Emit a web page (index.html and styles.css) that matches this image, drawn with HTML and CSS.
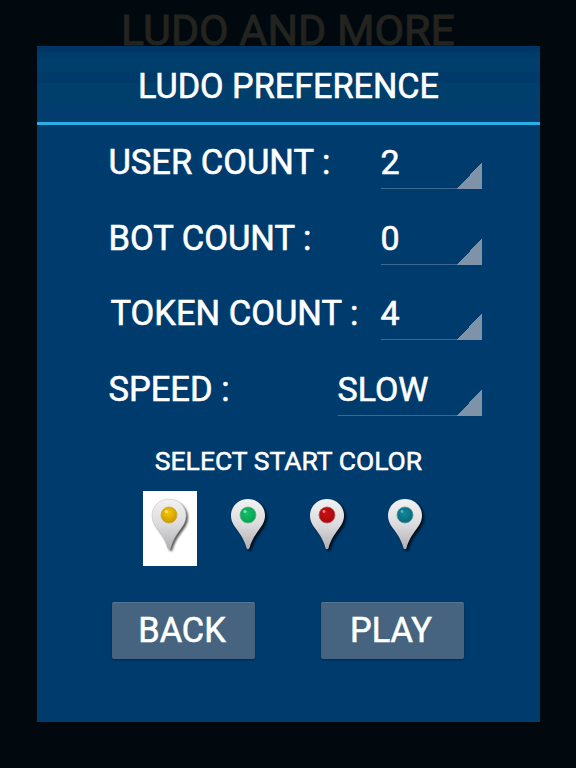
FILE: index.html
```html
<!DOCTYPE html>
<html lang="en">
<head>
<meta charset="utf-8">
<title>Ludo Preference</title>
<link rel="stylesheet" href="styles.css">
</head>
<body>
<svg class="defs" width="0" height="0" aria-hidden="true">
  <defs>
    <linearGradient id="body" x1="0" y1="0" x2="0" y2="1">
      <stop offset="0" stop-color="#f2f2f2"/>
      <stop offset="0.5" stop-color="#dcdcde"/>
      <stop offset="1" stop-color="#b0b0b4"/>
    </linearGradient>
    <radialGradient id="yellow" cx="0.45" cy="0.35" r="0.7">
      <stop offset="0" stop-color="#f6c800"/><stop offset="1" stop-color="#c79400"/>
    </radialGradient>
    <radialGradient id="green" cx="0.45" cy="0.4" r="0.7">
      <stop offset="0" stop-color="#12c06a"/><stop offset="1" stop-color="#0a9a50"/>
    </radialGradient>
    <radialGradient id="red" cx="0.45" cy="0.4" r="0.7">
      <stop offset="0" stop-color="#cf1014"/><stop offset="1" stop-color="#98080c"/>
    </radialGradient>
    <radialGradient id="teal" cx="0.45" cy="0.4" r="0.7">
      <stop offset="0" stop-color="#0f8a9c"/><stop offset="1" stop-color="#075f70"/>
    </radialGradient>
    <filter id="soft" x="-30%" y="-30%" width="160%" height="160%"><feGaussianBlur stdDeviation="1.1"/></filter>
    <filter id="tiny" x="-20%" y="-20%" width="140%" height="140%"><feGaussianBlur stdDeviation="0.35"/></filter>
    <path id="pin" d="M17 0C7.500 0 0 7.400 0 16.500C0 22 2.500 26 5.500 30C9.500 35.500 13.500 41 15.500 49C15.900 50.500 18.100 50.500 18.500 49C20.500 41 24.500 35.500 28.500 30C31.500 26 34 22 34 16.500C34 7.400 26.500 0 17 0Z"/>
  </defs>
</svg>
<main class="screen">
  <h1 class="app-title">LUDO AND MORE</h1>
  <section class="panel">
    <h2 class="panel-title">LUDO PREFERENCE</h2>
    <div class="form">
      <div class="row">
        <span class="label">USER COUNT :</span>
        <div class="spinner"><span>2</span></div>
      </div>
      <div class="row">
        <span class="label">BOT COUNT :</span>
        <div class="spinner"><span>0</span></div>
      </div>
      <div class="row">
        <span class="label label-token">TOKEN COUNT :</span>
        <div class="spinner"><span>4</span></div>
      </div>
      <div class="row">
        <span class="label">SPEED :</span>
        <div class="spinner spinner-wide"><span>SLOW</span></div>
      </div>
    </div>
    <p class="color-title">SELECT START COLOR</p>
    <div class="colors">
      <div class="color selected">
        <svg class="pin pin-first" viewBox="-5 -3 44 60"><use href="#pin" x="2" y="2" fill="#555" filter="url(#soft)"/><use href="#pin" fill="url(#body)" stroke="#c4c4c4" stroke-width=".6"/><circle cx="17" cy="16" r="8" fill="url(#yellow)" stroke="#c9a63a" stroke-width=".8" filter="url(#tiny)"/><circle cx="14.500" cy="12.500" r="1.600" fill="#ffe27a" filter="url(#tiny)"/></svg>
      </div>
      <div class="color">
        <svg class="pin" viewBox="-5 -3 44 60"><use href="#pin" x="2" y="2" fill="#00101c" filter="url(#soft)"/><use href="#pin" fill="url(#body)"/><circle cx="17" cy="16" r="8" fill="url(#green)" stroke="#5cb48a" stroke-width=".8" filter="url(#tiny)"/><circle cx="14" cy="12.500" r="1.600" fill="#7fe6ae" filter="url(#tiny)"/></svg>
      </div>
      <div class="color">
        <svg class="pin" viewBox="-5 -3 44 60"><use href="#pin" x="2" y="2" fill="#00101c" filter="url(#soft)"/><use href="#pin" fill="url(#body)"/><circle cx="17" cy="16" r="8" fill="url(#red)" stroke="#b85a5c" stroke-width=".8" filter="url(#tiny)"/><circle cx="14" cy="12.500" r="1.400" fill="#f08084" filter="url(#tiny)"/></svg>
      </div>
      <div class="color">
        <svg class="pin" viewBox="-5 -3 44 60"><use href="#pin" x="2" y="2" fill="#00101c" filter="url(#soft)"/><use href="#pin" fill="url(#body)"/><circle cx="17" cy="16" r="8" fill="url(#teal)" stroke="#4f9aa6" stroke-width=".8" filter="url(#tiny)"/><circle cx="14" cy="12.500" r="1.400" fill="#5fb0bc" filter="url(#tiny)"/></svg>
      </div>
    </div>
    <div class="actions">
      <button class="btn" type="button">BACK</button>
      <button class="btn" type="button">PLAY</button>
    </div>
  </section>
</main>
</body>
</html>
```
FILE: styles.css
```css
* { box-sizing: border-box; }
html, body { margin: 0; padding: 0; }
body {
  width: 576px;
  height: 768px;
  overflow: hidden;
  background: #01090f;
  font-family: Roboto, "Liberation Sans", sans-serif;
  color: #fff;
}
.defs { display: block; height: 0; }
.screen { display: flex; flex-direction: column; height: 768px; }
.app-title {
  margin: 0;
  height: 46px;
  padding-top: 7px;
  text-align: center;
  font-size: 43px;
  line-height: 47px;
  font-weight: 400;
  -webkit-text-stroke: 0.9px #23241f;
  color: #23241f;
  white-space: nowrap;
}
.panel {
  position: relative;
  width: 503px;
  height: 676px;
  margin-left: 37px;
  background: #003b6d;
  display: flex;
  flex-direction: column;
}
.panel-title {
  margin: 0;
  height: 79px;
  border-bottom: 3px solid #29b0e6;
  background: linear-gradient(#003666 0 6px, #003c6b 6px 12px, #003f6c 12px 26px, #003a6a 26px 37px, #003f6c 37px 60px, #033c6e 60px);
  text-align: center;
  font-size: 34.200px;
  line-height: 80px;
  font-weight: 400;
  -webkit-text-stroke: 0.6px #fff;
}
.form { display: flex; flex-direction: column; gap: 26.670px; margin-top: 15px; }
.row { display: flex; justify-content: space-between; height: 49px; padding: 0 58px 0 71.500px; }
.label { font-size: 34.500px; line-height: 44px; -webkit-text-stroke: 0.6px #fff; white-space: nowrap; }
.label-token { margin-left: 2px; }
.spinner {
  position: relative;
  width: 101px;
  height: 49px;
  border-bottom: 1px solid #3f6890;
  font-size: 34px;
  line-height: 44px;
  -webkit-text-stroke: 0.6px #fff;
  text-indent: -0.500px;
}
.spinner::after {
  content: "";
  position: absolute;
  right: 0;
  bottom: -1px;
  width: 25px;
  height: 27px;
  background: linear-gradient(to bottom right, transparent 50%, #7f93a8 50%);
}
.spinner-wide { width: 144px; }
.color-title { margin: 29px 0 0; text-align: center; font-size: 26.500px; line-height: 32px; -webkit-text-stroke: 0.5px #fff; }
.colors { display: flex; gap: 24.300px; margin: 14px 0 0 106px; }
.color { width: 54px; height: 75px; padding-top: 5px; display: flex; align-items: flex-start; justify-content: center; }
.color.selected { background: #fff; }
.pin { width: 44px; height: 60px; flex: none; }
.pin-first { margin-left: -2px; }
.actions { display: flex; gap: 66px; margin: 36px 0 0 75px; }
.btn {
  width: 143px;
  height: 57px;
  padding: 0 3px 2px 0;
  border: 0;
  border-radius: 2px;
  border-top: 1px solid #587590;
  background: #466480;
  box-shadow: 0 1px 2px #02294e;
  color: #fff;
  font-family: inherit;
  font-size: 34.300px;
  font-weight: 400;
  -webkit-text-stroke: 0.6px #fff;
}
```
